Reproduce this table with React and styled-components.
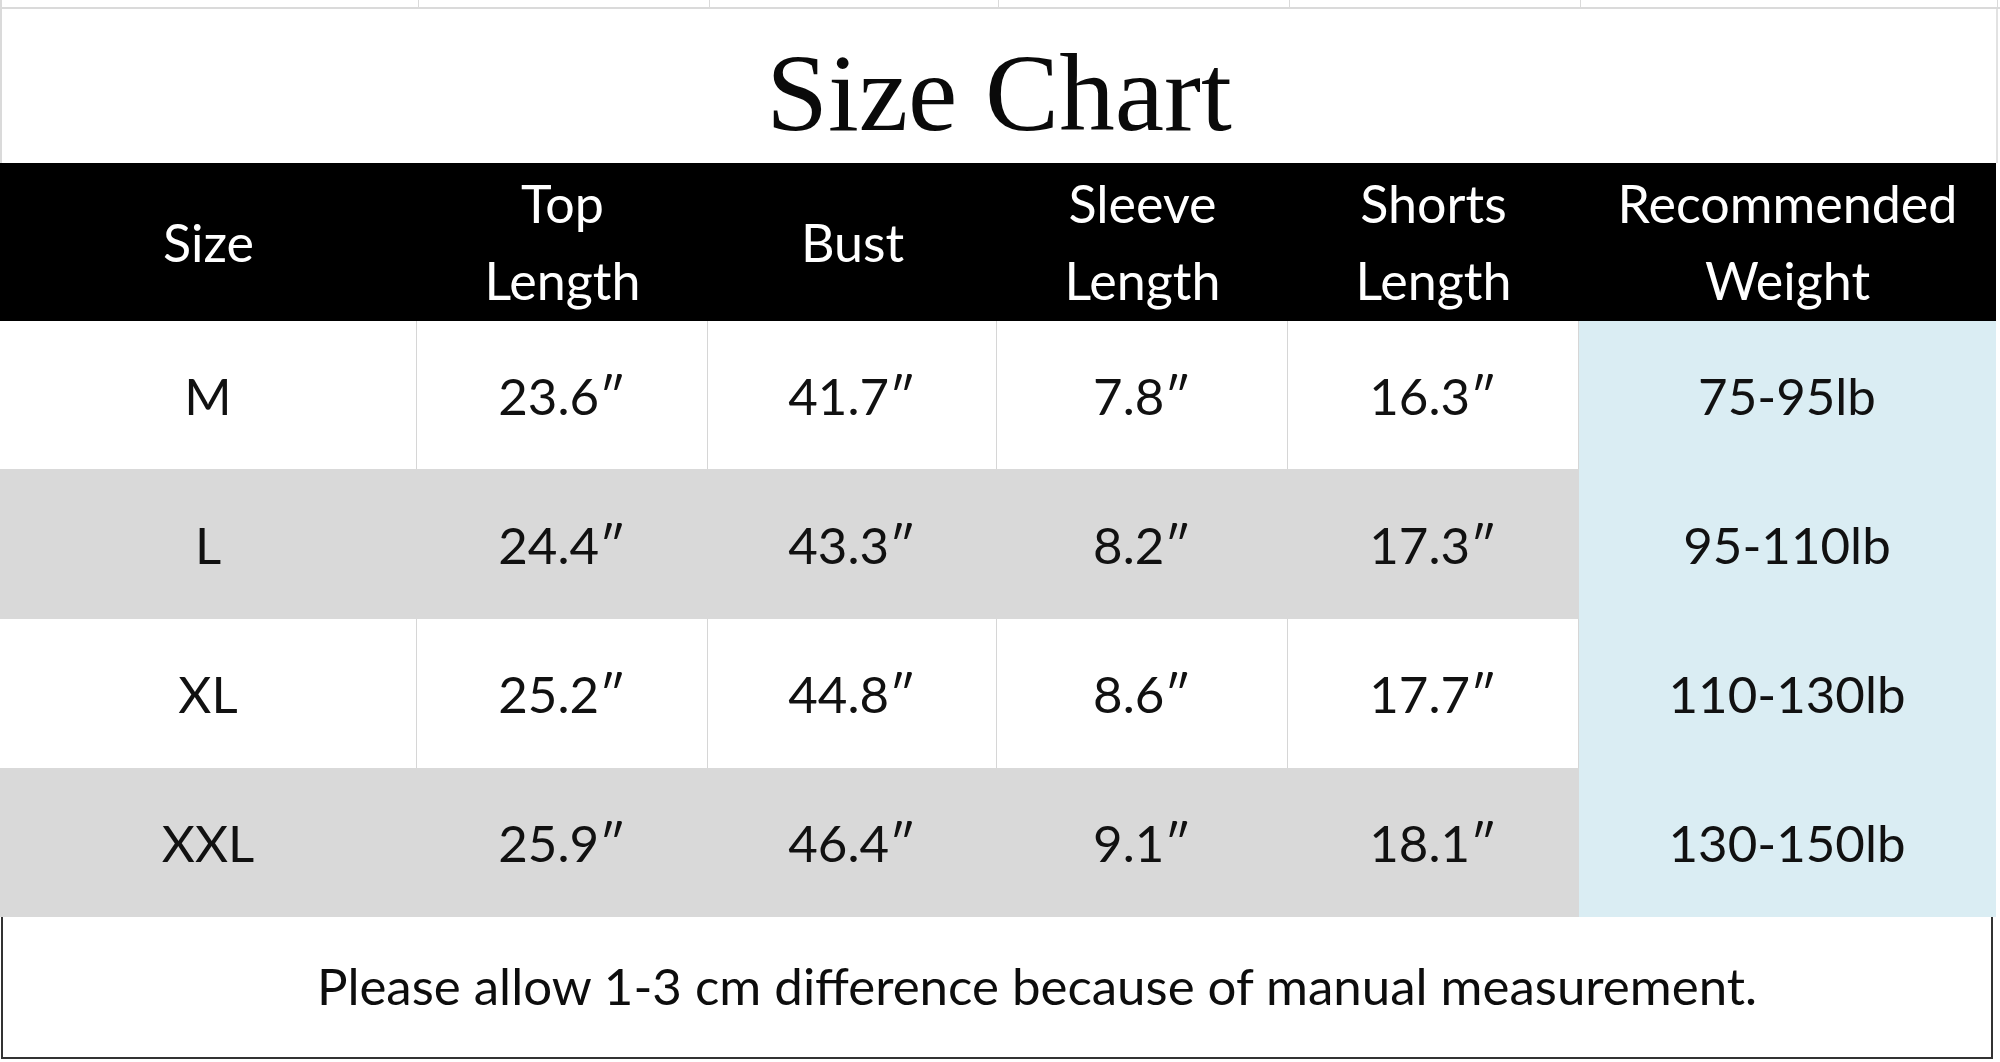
import React from "react";
import styled, { createGlobalStyle } from "styled-components";

const GlobalStyle = createGlobalStyle`
  html, body {
    margin: 0;
    padding: 0;
    background: #fff;
  }
`;

const COLS = "417px 291px 289px 291px 291px 417px";

const Page = styled.div`
  width: 2000px;
  height: 1062px;
  background: #fff;
  overflow: hidden;
  font-family: Lato, "Open Sans", sans-serif;
  color: #111;
`;

const TopStrip = styled.div`
  display: grid;
  grid-template-columns: ${COLS};
  height: 7px;
  border-bottom: 2px solid #dadada;
  border-left: 2px solid #dadada;

  span {
    border-right: 1px solid #dadada;
  }
`;

const TitleArea = styled.div`
  height: 154px;
  width: 1994px;
  border-left: 2px solid #dadada;
  border-right: 2px solid #e2e2e2;
  display: flex;
  align-items: center;
  justify-content: center;
`;

const Title = styled.h1`
  margin: 0;
  font-family: "Liberation Serif", "DejaVu Serif", serif;
  font-weight: 400;
  font-size: 111px;
  line-height: 1;
  color: #0a0a0a;
  padding-top: 12px;
`;

const Table = styled.div`
  display: grid;
  grid-template-columns: ${COLS};
  width: 1996px;
`;

const HeadCell = styled.div`
  height: 158px;
  background: #000;
  color: #fff;
  display: flex;
  align-items: center;
  justify-content: center;
  text-align: center;
  font-size: 52px;
  line-height: 77px;
  box-sizing: border-box;
`;

const Cell = styled.div`
  height: ${p => p.$h}px;
  box-sizing: border-box;
  display: flex;
  align-items: center;
  justify-content: center;
  font-size: 51px;
  background: ${p => (p.$blue ? "#daedf3" : p.$shade ? "#d9d9d9" : "#fff")};
  border-right: 1px solid ${p => (p.$shade || p.$blue ? "transparent" : "#d6d6d6")};
`;

const Footer = styled.div`
  height: 142px;
  width: 1992px;
  margin-left: 1px;
  box-sizing: border-box;
  border: 2px solid #333;
  border-top: none;
  display: flex;
  align-items: center;
  justify-content: center;
  padding-left: 80px;
  padding-bottom: 4px;
  font-size: 51px;
  color: #0d0d0d;
`;

const headers = [
  ["Size"],
  ["Top", "Length"],
  ["Bust"],
  ["Sleeve", "Length"],
  ["Shorts", "Length"],
  ["Recommended", "Weight"],
];

const rows = [
  { h: 148, cells: ["M", "23.6″", "41.7″", "7.8″", "16.3″", "75-95lb"] },
  { h: 150, cells: ["L", "24.4″", "43.3″", "8.2″", "17.3″", "95-110lb"] },
  { h: 149, cells: ["XL", "25.2″", "44.8″", "8.6″", "17.7″", "110-130lb"] },
  { h: 149, cells: ["XXL", "25.9″", "46.4″", "9.1″", "18.1″", "130-150lb"] },
];

export default function App() {
  return (
    <Page>
      <GlobalStyle />
      <TopStrip>
        {headers.map((_, i) => (
          <span key={i} />
        ))}
      </TopStrip>
      <TitleArea>
        <Title>Size Chart</Title>
      </TitleArea>
      <Table>
        {headers.map((lines, i) => (
          <HeadCell key={i}>
            <div>
              {lines.map((l, j) => (
                <div key={j}>{l}</div>
              ))}
            </div>
          </HeadCell>
        ))}
        {rows.map((row, r) =>
          row.cells.map((c, i) => (
            <Cell
              key={`${r}-${i}`}
              $h={row.h}
              $shade={r % 2 === 1}
              $blue={i === 5}
            >
              {c}
            </Cell>
          ))
        )}
      </Table>
      <Footer>Please allow 1-3 cm difference because of manual measurement.</Footer>
    </Page>
  );
}
